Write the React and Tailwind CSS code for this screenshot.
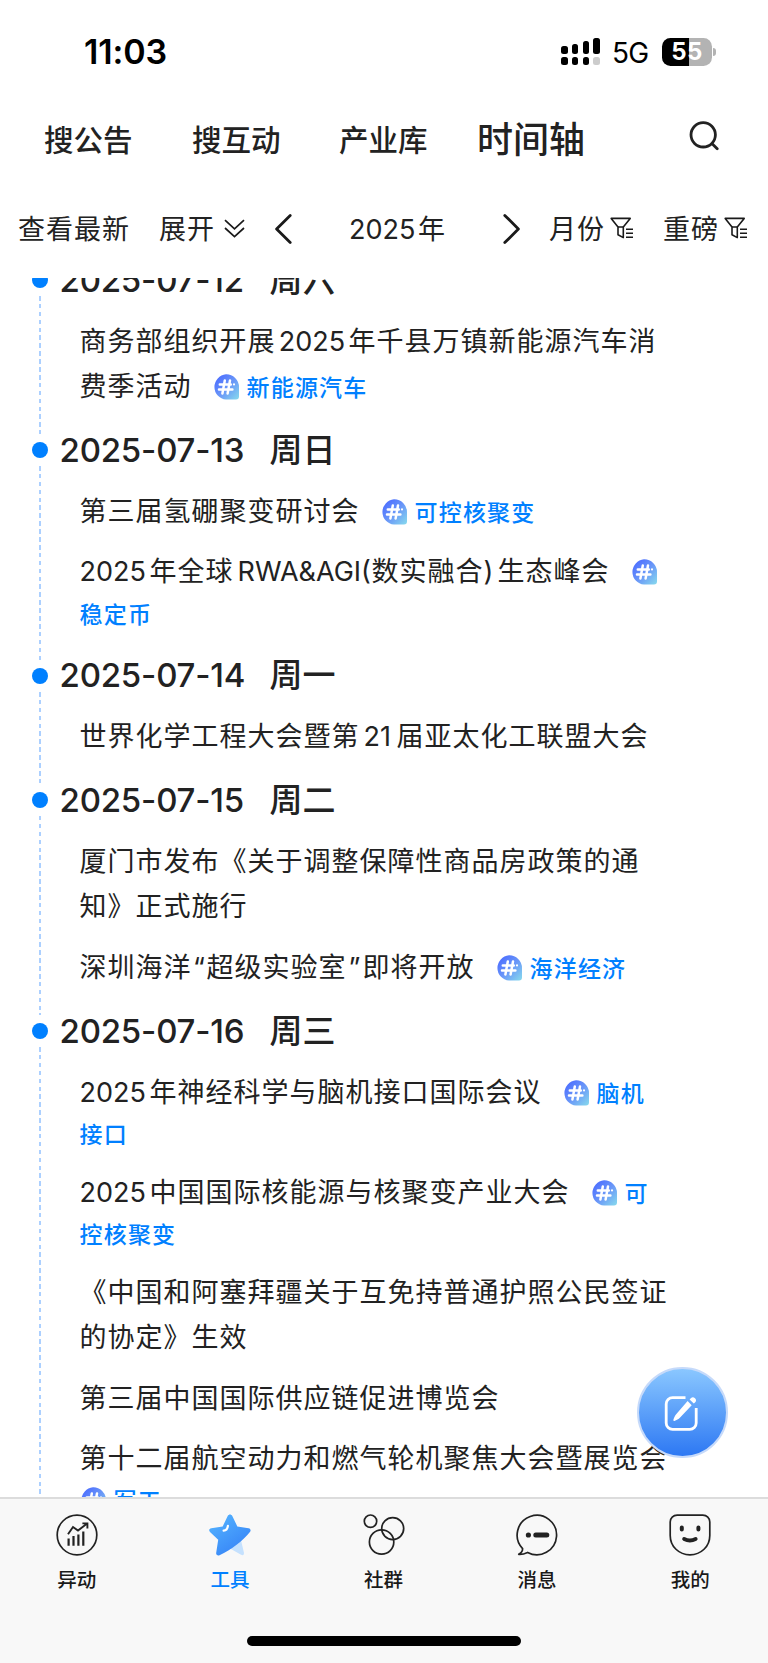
import React from "react";

const font = "font-['Inter','Noto_Sans_CJK_SC',sans-serif]";

/* Latin or numeric run inside Chinese copy */
function N({ w, children }) {
  return (
    <span className={`inline-block whitespace-nowrap tracking-normal ${w}`}>{children}</span>
  );
}

function Hash({ first }) {
  return (
    <svg
      viewBox="0 0 26 26"
      className={`inline-block h-[26px] w-[26px] align-[-4px] mr-[8px] ${first ? "" : "ml-[21px]"}`}
    >
      <defs>
        <linearGradient id="hashBg" x1="0.1" y1="0.1" x2="0.95" y2="0.95">
          <stop offset="0" stopColor="#4c6dff" />
          <stop offset="0.5" stopColor="#6a97f8" />
          <stop offset="1" stopColor="#84d4ee" />
        </linearGradient>
      </defs>
      <path d="M13 .3A12.7 12.7 0 0 1 26 13v9.6a3 3 0 0 1-3 3H13A12.7 12.7 0 0 1 13 .3z" fill="url(#hashBg)" />
      <path d="M11.800 6.600 9.400 19.400M17 6.600l-2.400 12.800M6.800 10.400h11M6 15.600h13.400" stroke="#fff" strokeWidth="2.500" strokeLinecap="round" fill="none" />
      <circle cx="21" cy="10.400" r="1.100" fill="#fff" />
    </svg>
  );
}

function Tag({ children }) {
  return <span className="text-[23px] font-medium tracking-[1.2px] text-[#0080ff]">{children}</span>;
}

function Line({ children }) {
  return <div className="h-[45.3px] whitespace-nowrap leading-[46px]">{children}</div>;
}

function TagLine({ children }) {
  return <div className="h-[40px] whitespace-nowrap leading-[38px]">{children}</div>;
}

function Day({ date, week, children }) {
  return (
    <section className="flex">
      <div className="-mb-[10px] flex w-[16px] shrink-0 flex-col items-center">
        <div className="flex h-[42px] items-center pt-[10px]">
          <div className="h-[16px] w-[16px] rounded-full bg-[#0080ff]" />
        </div>
        <div className="ml-px w-[2px] flex-1 bg-[repeating-linear-gradient(180deg,#acd0ff_0_4.5px,transparent_4.5px_7.9px)]" />
      </div>
      <div className="pl-[12px]">
        <h2 className="flex h-[52.6px] items-center whitespace-nowrap text-[33px] font-medium text-[#222]">
          <span className="w-[210px] tracking-[-0.2px]">{date}</span>
          <span>{week}</span>
        </h2>
        <div className="flex flex-col gap-[15px] pt-[12px] pb-[15px] pl-[20px] text-[27px] tracking-[1px] text-[#222]">
          {children}
        </div>
      </div>
    </section>
  );
}

function Filter() {
  return (
    <svg viewBox="0 0 24 24" className="-mt-[2px] h-[24px] w-[24px]" fill="none" stroke="#1a1a1a" strokeWidth="1.6">
      <path d="M1.200 2.400h19L13.300 11v10.600L8 18.800V11z" strokeLinejoin="round" />
      <path d="M8 11h5.300M16 13.200h7M16 17.200h7M16 21.200h7" />
    </svg>
  );
}

function StatusBar() {
  const bars = [["h-[8px]", "bg-black"], ["h-[10px]", "bg-black"], ["h-[13px]", "bg-black"], ["h-[16px]", "bg-[#ccc]"]];
  return (
    <div className="flex h-[103px] items-center pl-[84px] text-black">
      <div className="w-[477px] text-[34px] font-semibold tracking-[-0.1px]">11:03</div>
      <div className="flex w-[39px] items-end justify-between">
        {bars.map(([h, c]) => (
          <div key={h} className="flex flex-col gap-[3px]">
            <div className={`w-[6.5px] rounded-[2.5px] bg-black ${h}`} />
            <div className={`h-[7.5px] w-[6.5px] rounded-[2.5px] ${c}`} />
          </div>
        ))}
      </div>
      <div className="ml-[12px] w-[50px] pt-[2px] text-[28px] tracking-[-0.8px]">5G</div>
      <div className="flex h-[28px] w-[50px] items-center justify-center rounded-[8.5px] bg-[linear-gradient(90deg,#000_54%,#b3b3b3_54%)] text-[24px] font-bold tracking-[0.4px] text-white">
        55
      </div>
      <div className="ml-[1px] h-[8px] w-[3px] rounded-r-full bg-[#b3b3b3]" />
    </div>
  );
}

function Header() {
  return (
    <header className="flex h-[76px] items-center text-[29.5px] font-medium text-[#222]">
      <div className="-mt-[2px] w-[148px] pl-[44px]">搜公告</div>
      <div className="-mt-[2px] w-[147px] pl-[44px]">搜互动</div>
      <div className="-mt-[2px] w-[147px] pl-[44px]">产业库</div>
      <div className="-mt-[2px] w-[247px] pl-[35px] text-[36px]">时间轴</div>
      <svg viewBox="0 0 30 30" className="-mt-[10px] h-[30px] w-[30px]" fill="none" stroke="#222" strokeWidth="2.800" strokeLinecap="round">
        <circle cx="14.200" cy="13.800" r="12.200" />
        <path d="M23.400 22.900l4.800 4.800" />
      </svg>
    </header>
  );
}

function Toolbar() {
  return (
    <div className="flex h-[99px] items-center whitespace-nowrap pl-[18px] text-[27px] tracking-[1px] text-[#222]">
      <div className="w-[141px] pt-[3px]">查看最新</div>
      <div className="w-[65px] pt-[3px]">展开</div>
      <svg viewBox="0 0 21 20" className="h-[20px] w-[21px]" fill="none" stroke="#1a1a1a" strokeWidth="1.700">
        <path d="M1 1.200l9.500 8.600L20 1.200M1 9l9.500 8.600L20 9" />
      </svg>
      <svg viewBox="0 0 18 32" className="ml-[29px] h-[32px] w-[18px]" fill="none" stroke="#1a1a1a" strokeWidth="2.800" strokeLinecap="round" strokeLinejoin="round">
        <path d="M16.200 2.400L2.600 16l13.600 13.600" />
      </svg>
      <div className="w-[211px] pt-[3px] pl-[57px]">
        <N w="w-[69px]">2025</N>年
      </div>
      <svg viewBox="0 0 18 32" className="h-[32px] w-[18px]" fill="none" stroke="#1a1a1a" strokeWidth="2.800" strokeLinecap="round" strokeLinejoin="round">
        <path d="M1.800 2.400L15.400 16 1.800 29.600" />
      </svg>
      <div className="ml-[28px] w-[61px] pt-[3px]">月份</div>
      <Filter />
      <div className="ml-[29px] w-[61px] pt-[3px]">重磅</div>
      <Filter />
    </div>
  );
}

const stroke = { fill: "none", stroke: "#222", strokeWidth: 1.7, strokeLinejoin: "round", strokeLinecap: "round" };

const tabs = [
  {
    label: "异动",
    icon: (
      <g {...stroke}>
        <circle cx="21" cy="21" r="19.8" />
        <path d="M12 20.2l5-7.2 5 3.600 8.800-6.800M26.400 9.400h5v5" strokeWidth="1.900" strokeLinecap="butt" strokeLinejoin="miter" />
        <path d="M12.600 24.400v7.400M17.500 22v9.800M22.400 20.600v11.200M27.300 17.400v14.400" strokeWidth="2.200" strokeLinecap="butt" />
      </g>
    ),
  },
  {
    label: "工具",
    active: true,
    icon: (
      <g>
        <defs>
          <linearGradient id="star" x1="0.1" y1="0" x2="0.8" y2="1">
            <stop offset="0" stopColor="#55b5ff" />
            <stop offset="1" stopColor="#3480f6" />
          </linearGradient>
        </defs>
        <path d="M31.500 24l3.400 14.600c.5 2.200-1 3.300-2.800 2.200L21 34.600z" fill="#c5e1fe" />
        <path d="M18.700 1.900c1-2 3.600-2 4.600 0l5 10.500 11.300 1.800c2 .4 2.600 2.400 1.300 3.900C34 26.700 22.500 36 10.500 41.300c-2 .8-3.700-.5-3.300-2.600l2-13L1 18c-1.500-1.600-.8-3.400 1.300-3.800l11.400-1.800z" fill="url(#star)" />
        <path d="M14.600 16.600c3-.2 4-2 4.300-4.800" fill="none" stroke="#fff" strokeWidth="2.200" strokeLinecap="round" />
      </g>
    ),
  },
  {
    label: "社群",
    icon: (
      <g {...stroke}>
        <circle cx="7.500" cy="7.200" r="6.200" />
        <circle cx="29.700" cy="14.600" r="11" />
        <circle cx="18.600" cy="28" r="12.200" />
      </g>
    ),
  },
  {
    label: "消息",
    icon: (
      <g {...stroke}>
        <path d="M6.600 34.600A19.700 19.700 0 1 1 11.600 38.400C9 39.600 6 40.600 2.700 40.300c2.400-1.200 4-3 3.900-5.700z" />
        <circle cx="12.400" cy="21" r="2.600" fill="#222" stroke="none" />
        <path d="M19.800 21h11" strokeWidth="5" />
      </g>
    ),
  },
  {
    label: "我的",
    icon: (
      <g {...stroke}>
        <path d="M8.200 1.200h25.600c4 0 7 2.800 7 6.800v13.400C40.800 32.500 32 40.800 21 40.800S1.200 32.500 1.200 21.400V8c0-4 3-6.800 7-6.800z" />
        <path d="M12.800 13.400v2M29.400 13.400v2" strokeWidth="4" />
        <path d="M15.200 25c3.400 1.700 8 1.700 11.400 0" strokeWidth="4" />
      </g>
    ),
  },
];

function TabBar() {
  return (
    <footer className="flex h-[166px] flex-col items-center border-t-2 border-[#dcdcdc] bg-[#f8f8f8]">
      <nav className="flex w-full pt-[15px] pr-px">
        {tabs.map((t) => (
          <div key={t.label} className="flex flex-1 flex-col items-center">
            <svg viewBox="0 0 42 42" className="h-[42px] w-[42px]" overflow="visible">
              {t.icon}
            </svg>
            <span className={`mt-[9px] text-[19.5px] font-medium leading-[31px] ${t.active ? "text-[#0080ff]" : "text-[#1a1a1a]"}`}>
              {t.label}
            </span>
          </div>
        ))}
      </nav>
      <div className="mt-[40px] h-[10px] w-[274px] rounded-full bg-black" />
    </footer>
  );
}

function ComposeButton() {
  return (
    <button className="absolute left-[636.500px] top-[1367px] flex h-[91px] w-[91px] items-center justify-center rounded-full border-[2.5px] border-[#c6dafa] bg-[linear-gradient(180deg,#8ac7ff,#2d78f3)] pr-[3px]">
      <svg viewBox="0 0 34 36" className="h-[36px] w-[34px]" fill="none" stroke="#fff" strokeWidth="2.800" strokeLinecap="round">
        <path d="M21.500 2.600H8.600a6.400 6.400 0 0 0-6.400 6.400v19a6.400 6.400 0 0 0 6.400 6.400h17.200a6.400 6.400 0 0 0 6.400-6.400V13" strokeLinecap="butt" />
        <path d="M23.600 6.100l4.100 4.100-11.600 12.300c-1.700 1.800-3.400 2.600-5.700 3.400-.8.200-1.300-.3-1-1.100.8-2.400 1.600-4.400 3.200-6z" fill="#fff" stroke="none" />
        <path d="M25.600 4.400l1.200-1.200a2.900 2.900 0 0 1 4.200 4.200L29.800 8.600z" fill="#fff" stroke="none" />
      </svg>
    </button>
  );
}

export default function App() {
  return (
    <div lang="zh-CN" className={`relative flex h-[1663px] w-[768px] flex-col overflow-hidden bg-white ${font}`}>
      <StatusBar />
      <Header />
      <Toolbar />
      <main className="min-h-0 flex-1 overflow-hidden pl-[31.500px]">
        <div className="-mt-[23.800px]">
          <Day date="2025-07-12" week="周六">
            <div>
              <Line>商务部组织开展<N w="w-[73px] text-center">2025</N>年千县万镇新能源汽车消</Line>
              <Line>费季活动<Hash /><Tag>新能源汽车</Tag></Line>
            </div>
          </Day>
          <Day date="2025-07-13" week="周日">
            <Line>第三届氢硼聚变研讨会<Hash /><Tag>可控核聚变</Tag></Line>
            <div>
              <Line><N w="w-[70px]">2025</N>年全球<N w="w-[138px] pl-[4px]">RWA&amp;AGI(</N>数实融合<N w="w-[14px]">)</N>生态峰会<Hash /></Line>
              <TagLine><Tag>稳定币</Tag></TagLine>
            </div>
          </Day>
          <Day date="2025-07-14" week="周一">
            <Line>世界化学工程大会暨第<N w="w-[37px] pl-[4px]">21</N>届亚太化工联盟大会</Line>
          </Day>
          <Day date="2025-07-15" week="周二">
            <div>
              <Line>厦门市发布《关于调整保障性商品房政策的通</Line>
              <Line>知》正式施行</Line>
            </div>
            <Line>深圳海洋<N w="w-[15px] text-center">“</N>超级实验室<N w="w-[16px] text-center">”</N>即将开放<Hash /><Tag>海洋经济</Tag></Line>
          </Day>
          <Day date="2025-07-16" week="周三">
            <div>
              <Line><N w="w-[70px]">2025</N>年神经科学与脑机接口国际会议<Hash /><Tag>脑机</Tag></Line>
              <TagLine><Tag>接口</Tag></TagLine>
            </div>
            <div>
              <Line><N w="w-[70px]">2025</N>中国国际核能源与核聚变产业大会<Hash /><Tag>可</Tag></Line>
              <TagLine><Tag>控核聚变</Tag></TagLine>
            </div>
            <div>
              <Line>《中国和阿塞拜疆关于互免持普通护照公民签证</Line>
              <Line>的协定》生效</Line>
            </div>
            <Line>第三届中国国际供应链促进博览会</Line>
            <div>
              <Line>第十二届航空动力和燃气轮机聚焦大会暨展览会</Line>
              <TagLine><Hash first /><Tag>军工</Tag></TagLine>
            </div>
          </Day>
        </div>
      </main>
      <TabBar />
      <ComposeButton />
    </div>
  );
}
